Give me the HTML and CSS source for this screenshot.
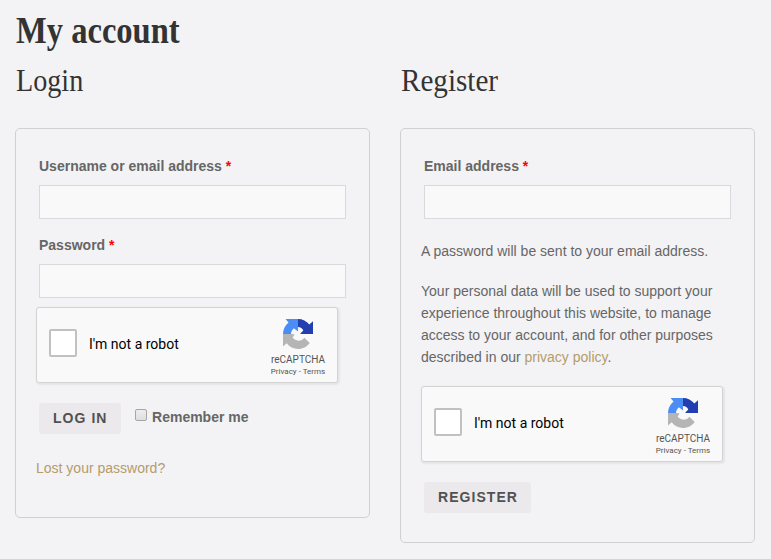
FILE: index.html
```html
<!DOCTYPE html>
<html lang="en">
<head>
<meta charset="utf-8">
<title>My account</title>
<link rel="stylesheet" href="styles.css">
</head>
<body>
<svg class="defs" aria-hidden="true">
  <symbol id="recaptcha" viewBox="0 0 30 30">
    <path fill="#233eae" d="M15 0C19.500 0 23.600 2 26.300 5.500L30 2.200V15H16.500L20.300 11.500C19.300 9.300 17.500 8.200 15 8Z"/>
    <path fill="#4a8ef5" d="M15 0H2.500L5.500 3.400C2 6.300 0 10.400 0 15H8C8 12.800 9 10.800 11 9.500L15 13Z"/>
    <path fill="#b5b5b5" d="M0 15V27.500L3.700 24.300C6.500 28 10.500 30 15 30C19.800 30 24 27.700 26.700 24L21.400 18.700C20 20.700 18 21.700 15.500 21.700C13 21.700 11 20.400 9.600 18.600L13 15Z"/>
    <path fill="#f9f9f9" d="M9 15L8.300 13.300L11.500 12.500L10.500 9.300L15 12.500L16 9L19.500 12L17 14.500L20.500 15.500L15.500 18L10 18.500L11.500 15.500Z"/>
  </symbol>
</svg>
<main>
  <h1><span>My account</span></h1>
  <div class="columns">
    <section>
      <h2 class="login-title"><span>Login</span></h2>
      <form class="panel">
        <div class="field">
          <label for="username">Username or email address <b class="required">*</b></label>
          <input class="text" id="username" type="text">
        </div>
        <div class="field">
          <label for="password">Password <b class="required">*</b></label>
          <input class="text" id="password" type="password">
        </div>
        <div class="captcha">
          <span class="box"></span>
          <span class="prompt">I'm not a robot</span>
          <div class="brand">
            <svg><use href="#recaptcha"/></svg>
            <span class="name">reCAPTCHA</span>
            <span class="legal">Privacy - Terms</span>
          </div>
        </div>
        <div class="actions">
          <button type="button">LOG IN</button>
          <label class="remember"><input class="check" type="checkbox"><span>Remember me</span></label>
        </div>
        <p class="lost"><a>Lost your password?</a></p>
      </form>
    </section>
    <section>
      <h2 class="register-title"><span>Register</span></h2>
      <form class="panel">
        <div class="field">
          <label for="email">Email address <b class="required">*</b></label>
          <input class="text" id="email" type="text">
        </div>
        <p class="note">A password will be sent to your email address.</p>
        <p class="policy">Your personal data will be used to support your<br>experience throughout this website, to manage<br>access to your account, and for other purposes<br>described in our <a>privacy policy</a>.</p>
        <div class="captcha">
          <span class="box"></span>
          <span class="prompt">I'm not a robot</span>
          <div class="brand">
            <svg><use href="#recaptcha"/></svg>
            <span class="name">reCAPTCHA</span>
            <span class="legal">Privacy - Terms</span>
          </div>
        </div>
        <div class="actions">
          <button type="button">REGISTER</button>
        </div>
      </form>
    </section>
  </div>
</main>
</body>
</html>
```
FILE: styles.css
```css
* { box-sizing: border-box; }
body {
  margin: 0;
  background: #f3f3f5;
  color: #666;
  font: 14px/22px "Liberation Sans", Arial, sans-serif;
}
.defs { display: none; }
main { padding: 11px 16px 0 15px; }
h1, h2 {
  margin: 0;
  padding-left: 1px;
  color: #333;
  font-family: "Liberation Serif", "Times New Roman", serif;
}
h1 span, h2 span { display: inline-block; transform-origin: 0 50%; }
h1 { height: 51px; font-size: 37px; line-height: 40px; }
h1 span { transform: scaleX(.88); }
h2 { height: 66px; font-size: 32px; line-height: 36px; font-weight: 400; }
.login-title span { transform: scaleX(.88); }
.register-title span { transform: scaleX(.91); }
.columns { display: grid; grid-template-columns: 355px 355px; gap: 30px; align-items: start; }
.panel { border: 1px solid #d0cfd3; border-radius: 5px; padding: 23px 20px 29px; }
.field { padding: 0 3px; margin-bottom: 12px; }
.field label { display: block; height: 33px; line-height: 28px; font-weight: 700; }
.required { color: #f00; }
.text {
  display: block;
  width: 307px;
  height: 34px;
  border: 1px solid #d9d9dc;
  border-radius: 0;
  background: #f9f9f9;
}
.captcha {
  display: flex;
  align-items: center;
  width: 302px;
  height: 76px;
  margin-top: -3px;
  padding-left: 12px;
  border: 1px solid #d3d3d3;
  border-radius: 3px;
  background: #f9f9f9;
  box-shadow: 1px 1px 2px 1px rgba(0, 0, 0, .06);
  font-family: Roboto, sans-serif;
}
.box { width: 28px; height: 28px; margin-top: -4px; border: 2px solid #c1c1c1; border-radius: 2px; background: #fff; }
.prompt { margin: -1px auto 0 12px; color: #000; font-size: 14px; line-height: 17px; }
.brand { display: flex; flex-direction: column; align-items: center; align-self: flex-start; width: 70px; margin-right: 4px; padding-top: 11px; color: #555; }
.brand svg { width: 30px; height: 30px; }
.name { margin-top: 5px; font-size: 10px; line-height: 12px; }
.legal { margin-top: 1px; font-size: 8px; line-height: 10px; white-space: nowrap; }
.actions { display: flex; align-items: flex-start; padding-left: 3px; margin-top: 20px; }
button {
  height: 31px;
  padding: 0 13px 0 14px;
  border: 0;
  border-radius: 3px;
  background: #ebe9eb;
  color: #515151;
  font: 700 14px/31px "Liberation Sans", Arial, sans-serif;
  letter-spacing: 1.05px;
}
.remember { display: flex; margin: 3px 0 0 14px; font-weight: 700; }
.check {
  appearance: none;
  width: 12px;
  height: 12px;
  margin: 3px 5.500px 0 0;
  border: 1px solid #a6a6a6;
  border-radius: 2px;
  background: linear-gradient(#ededed, #dedede);
}
p { margin: 0; }
a { color: #b39c6b; }
.lost { margin-top: 23px; padding-bottom: 9px; }
.note { margin-top: 21px; }
.policy { margin: 18px 0 21px; }
```
